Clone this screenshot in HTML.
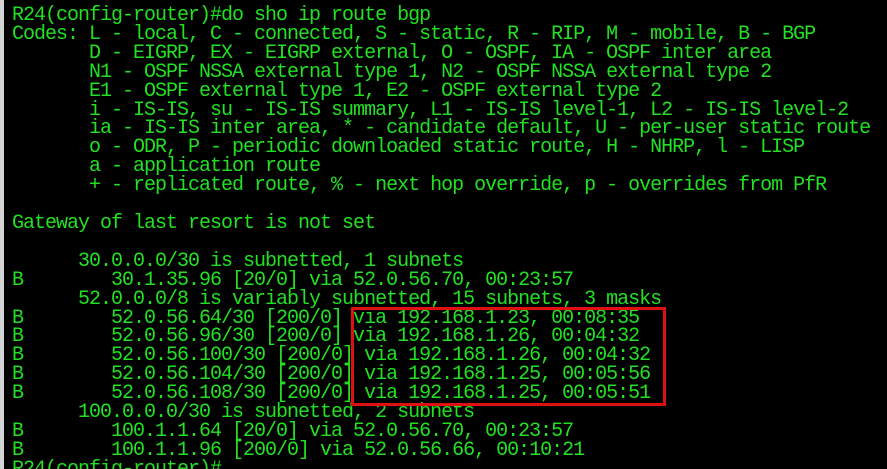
<!DOCTYPE html>
<html><head><meta charset="utf-8"><style>
html,body{margin:0;padding:0;background:#000;width:887px;height:469px;overflow:hidden;position:relative}
.strip{position:absolute;left:0;top:0;width:4px;height:469px;background:#d4d4d4}
pre{position:absolute;left:12px;top:7px;margin:0;font-family:"Liberation Mono",monospace;font-size:20px;letter-spacing:-1px;line-height:18.9px;color:#22e022;white-space:pre}
.box{position:absolute;left:351px;top:307px;width:309px;height:93px;border:3px solid #e01010}
</style></head><body>
<div class="strip"></div>
<pre>R24(config-router)#do sho ip route bgp
Codes: L - local, C - connected, S - static, R - RIP, M - mobile, B - BGP
       D - EIGRP, EX - EIGRP external, O - OSPF, IA - OSPF inter area
       N1 - OSPF NSSA external type 1, N2 - OSPF NSSA external type 2
       E1 - OSPF external type 1, E2 - OSPF external type 2
       i - IS-IS, su - IS-IS summary, L1 - IS-IS level-1, L2 - IS-IS level-2
       ia - IS-IS inter area, * - candidate default, U - per-user static route
       o - ODR, P - periodic downloaded static route, H - NHRP, l - LISP
       a - application route
       + - replicated route, % - next hop override, p - overrides from PfR

Gateway of last resort is not set

      30.0.0.0/30 is subnetted, 1 subnets
B        30.1.35.96 [20/0] via 52.0.56.70, 00:23:57
      52.0.0.0/8 is variably subnetted, 15 subnets, 3 masks
B        52.0.56.64/30 [200/0] via 192.168.1.23, 00:08:35
B        52.0.56.96/30 [200/0] via 192.168.1.26, 00:04:32
B        52.0.56.100/30 [200/0] via 192.168.1.26, 00:04:32
B        52.0.56.104/30 [200/0] via 192.168.1.25, 00:05:56
B        52.0.56.108/30 [200/0] via 192.168.1.25, 00:05:51
      100.0.0.0/30 is subnetted, 2 subnets
B        100.1.1.64 [20/0] via 52.0.56.70, 00:23:57
B        100.1.1.96 [200/0] via 52.0.56.66, 00:10:21
R24(config-router)#</pre>
<div class="box"></div>
</body></html>
